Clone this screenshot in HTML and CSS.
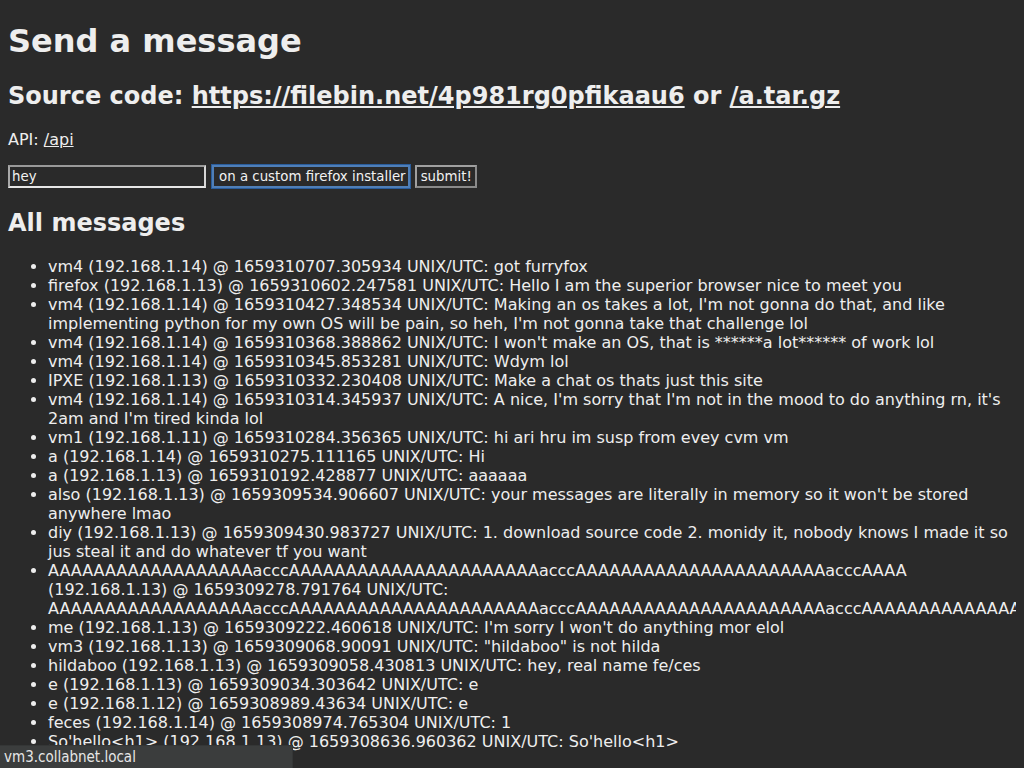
FILE: index.html
```html
<!DOCTYPE html>
<html lang="en">

<head>
	<meta charset="UTF-8" />
	<meta name="viewport" content="width=device-width, initial-scale=1.0" />
	<title>Send a message</title>
	<link rel="stylesheet" href="styles.css">
</head>

<body>
	<h1>Send a message</h1>
	<h2>Source code: <a href="#">https://filebin.net/4p981rg0pfikaau6</a> or <a href="#">/a.tar.gz</a></h2>
	<p>API: <a href="#">/api</a></p>
	<form class="send" onsubmit="return false">
		<input type="text" class="name" value="hey">
		<input type="text" class="msg focused" value="on a custom firefox installer">
		<button type="submit">submit!</button>
	</form>
	<h2 class="all">All messages</h2>
	<ul class="messages">
		<li>vm4 (192.168.1.14) @ 1659310707.305934 UNIX/UTC: got furryfox</li>
		<li>firefox (192.168.1.13) @ 1659310602.247581 UNIX/UTC: Hello I am the superior browser nice to meet you</li>
		<li>vm4 (192.168.1.14) @ 1659310427.348534 UNIX/UTC: Making an os takes a lot, I'm not gonna do that, and like implementing python for my own OS will be pain, so heh, I'm not gonna take that challenge lol</li>
		<li>vm4 (192.168.1.14) @ 1659310368.388862 UNIX/UTC: I won't make an OS, that is ******a lot****** of work lol</li>
		<li>vm4 (192.168.1.14) @ 1659310345.853281 UNIX/UTC: Wdym lol</li>
		<li>IPXE (192.168.1.13) @ 1659310332.230408 UNIX/UTC: Make a chat os thats just this site</li>
		<li>vm4 (192.168.1.14) @ 1659310314.345937 UNIX/UTC: A nice, I'm sorry that I'm not in the mood to do anything rn, it's 2am and I'm tired kinda lol</li>
		<li>vm1 (192.168.1.11) @ 1659310284.356365 UNIX/UTC: hi ari hru im susp from evey cvm vm</li>
		<li>a (192.168.1.14) @ 1659310275.111165 UNIX/UTC: Hi</li>
		<li>a (192.168.1.13) @ 1659310192.428877 UNIX/UTC: aaaaaa</li>
		<li>also (192.168.1.13) @ 1659309534.906607 UNIX/UTC: your messages are literally in memory so it won't be stored anywhere lmao</li>
		<li>diy (192.168.1.13) @ 1659309430.983727 UNIX/UTC: 1. download source code 2. monidy it, nobody knows I made it so jus steal it and do whatever tf you want</li>
		<li>AAAAAAAAAAAAAAAAAAacccAAAAAAAAAAAAAAAAAAAAAAacccAAAAAAAAAAAAAAAAAAAAAAacccAAAA (192.168.1.13) @ 1659309278.791764 UNIX/UTC: AAAAAAAAAAAAAAAAAAacccAAAAAAAAAAAAAAAAAAAAAAacccAAAAAAAAAAAAAAAAAAAAAAacccAAAAAAAAAAAAAAAAAAAAAAacccAAAA</li>
		<li>me (192.168.1.13) @ 1659309222.460618 UNIX/UTC: I'm sorry I won't do anything mor elol</li>
		<li>vm3 (192.168.1.13) @ 1659309068.90091 UNIX/UTC: "hildaboo" is not hilda</li>
		<li>hildaboo (192.168.1.13) @ 1659309058.430813 UNIX/UTC: hey, real name fe/ces</li>
		<li>e (192.168.1.13) @ 1659309034.303642 UNIX/UTC: e</li>
		<li>e (192.168.1.12) @ 1659308989.43634 UNIX/UTC: e</li>
		<li>feces (192.168.1.14) @ 1659308974.765304 UNIX/UTC: 1</li>
		<li>So'hello&lt;h1&gt; (192.168.1.13) @ 1659308636.960362 UNIX/UTC: So'hello&lt;h1&gt;</li>
	</ul>
	<div class="status">vm3.collabnet.local</div>
</body>

</html>
```

FILE: styles.css
```css
html {
	overflow: hidden;
	background: #2a2a2a;
}

body {
	margin: 0 8px 8px 8px;
	font-family: "DejaVu Sans", sans-serif;
	color: #eeeeee;
	background: #2a2a2a;
}

h1 {
	margin: 21.5px 0 22.5px 0;
}

a {
	color: #eeeeee;
}

.all {
	margin-top: 21px;
}

.send input,
.send button {
	font-family: "DejaVu Sans", sans-serif;
	font-size: 13.33px;
	color: #f2f2f2;
	background: #2a2a2a;
	height: 23px;
	margin: 0;
	box-sizing: border-box;
	vertical-align: middle;
}

.send input {
	width: 198px;
	padding: 1px 2px;
	border: 2px solid;
	border-color: #999999 #d6d6d6 #e6e6e6 #a8a8a8;
}

.send input.msg {
	margin-left: 1px;
	padding-left: 5px;
	border-color: #4f7fb8;
	outline: 1px solid #2a5d9c;
	outline-offset: 0;
}

.send button {
	width: 62px;
	padding: 1px 3px;
	border: 2px solid;
	border-color: #a0a0a0 #8a8a8a #8a8a8a #a0a0a0;
}

.status {
	position: fixed;
	left: 0;
	bottom: 0;
	width: 288px;
	height: 22px;
	padding-left: 4px;
	background: #3b3d3d;
	color: #e6e6e6;
	font-family: "DejaVu Sans Condensed", "DejaVu Sans", sans-serif;
	font-size: 15px;
	line-height: 22px;
	border-top: 1px solid #343636;
	border-right: 1px solid #343636;
}
```
